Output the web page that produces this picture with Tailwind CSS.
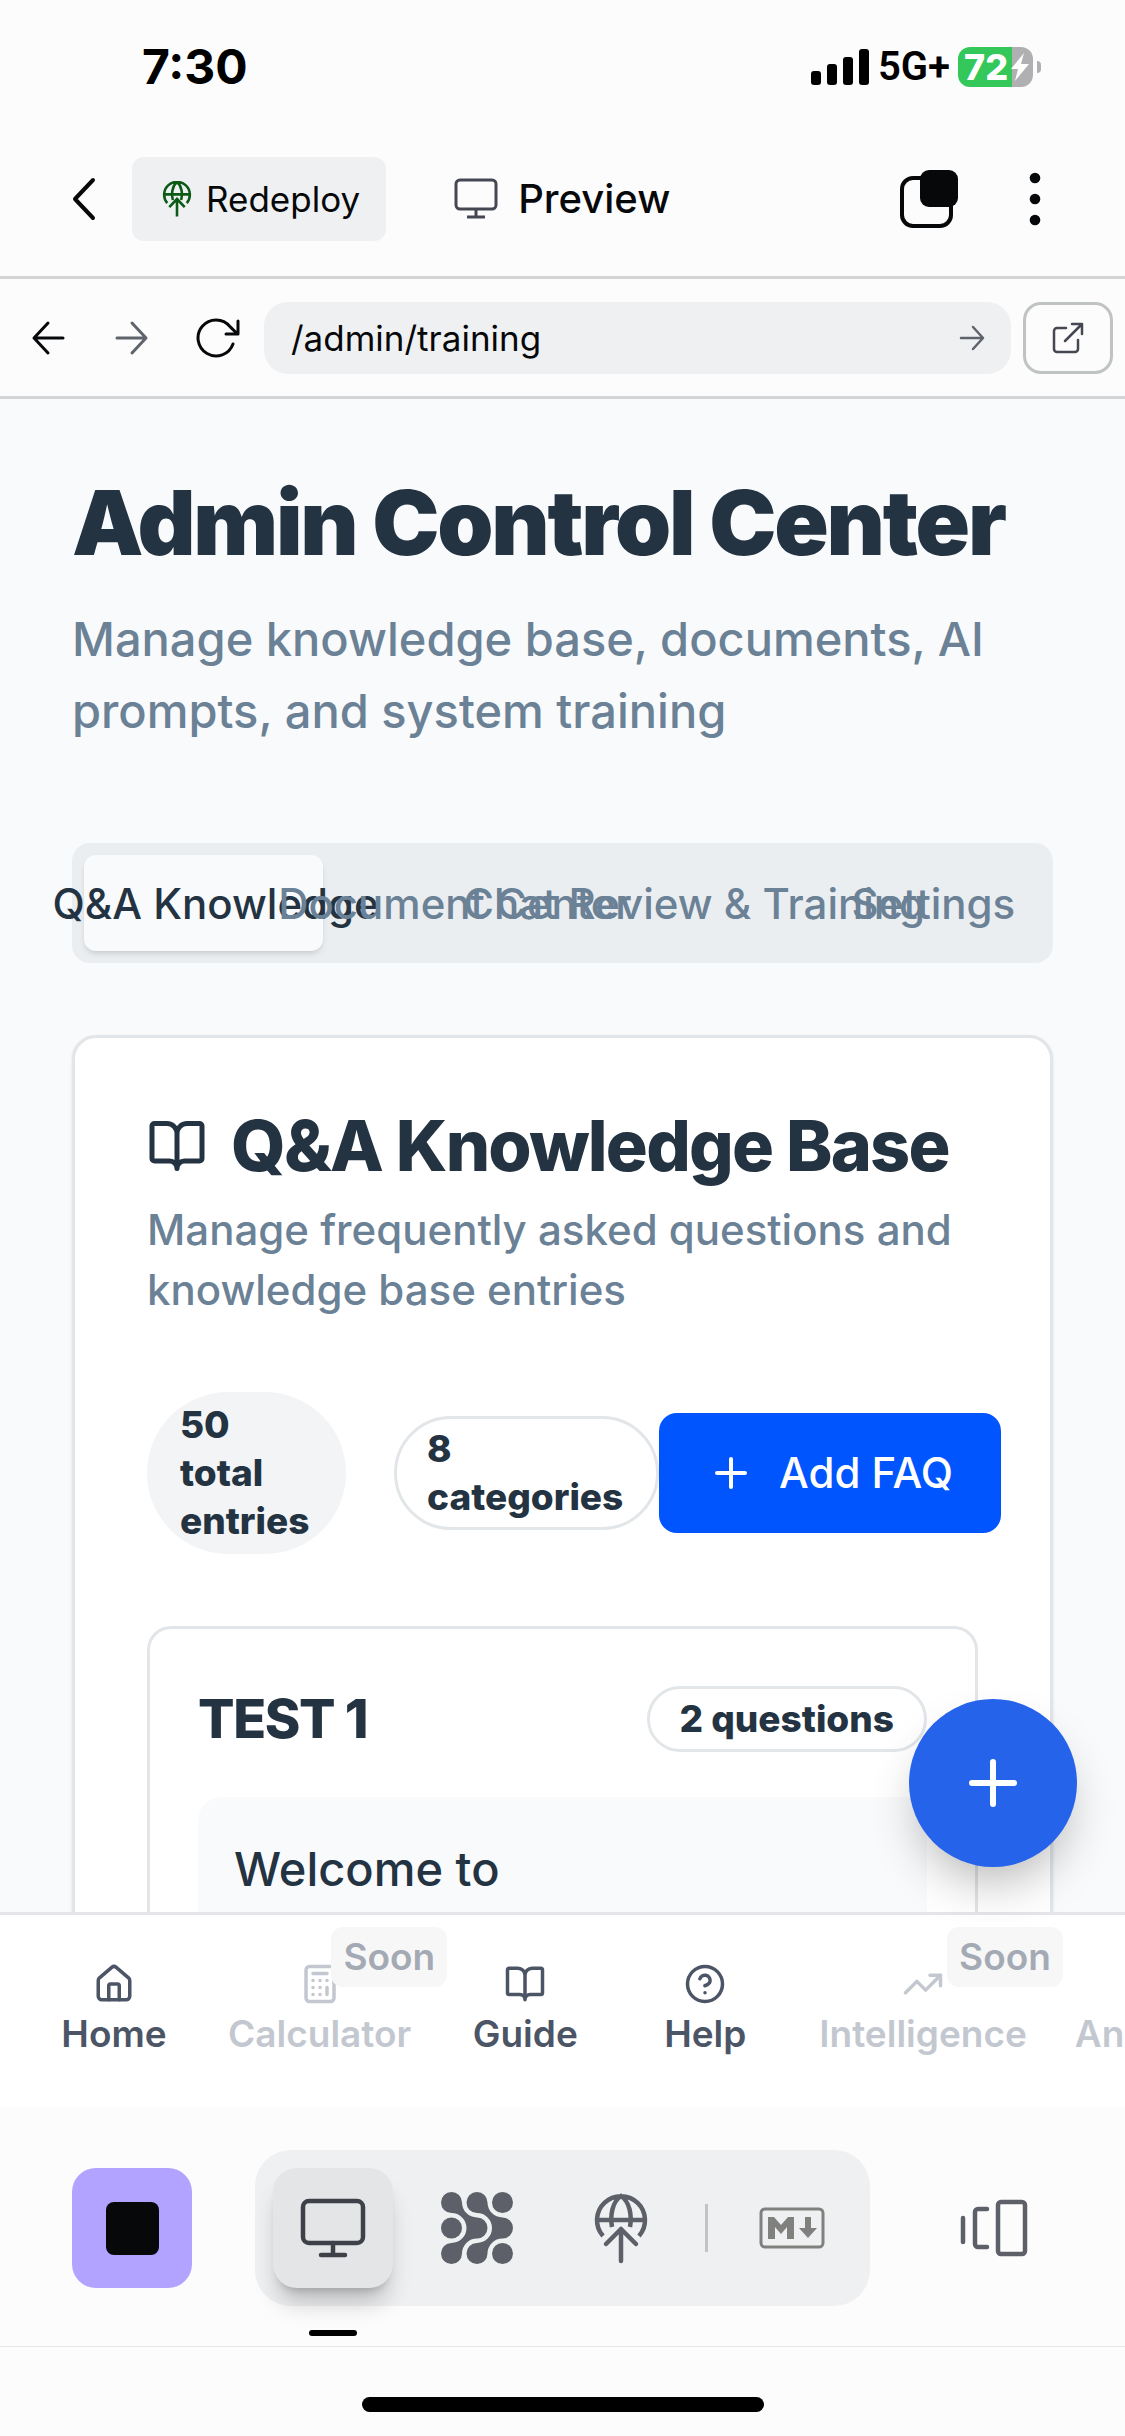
<!DOCTYPE html>
<html lang="en">
<head>
<meta charset="utf-8">
<meta name="viewport" content="width=device-width, initial-scale=1">
<title>Admin Control Center</title>
<script src="https://cdn.jsdelivr.net/npm/@tailwindcss/browser@4"></script>
</head>
<body class="flex h-screen flex-col overflow-hidden bg-[#fcfcfd] font-['Inter',sans-serif] text-[#243342]">

  <!-- Status bar -->
  <div class="flex h-[134px] shrink-0 items-center justify-between pr-[84px] pl-[142px] text-black">
    <time class="text-[48px] leading-[60px] font-bold">7:30</time>
    <div class="flex items-center gap-2">
      <svg class="h-9 w-[59px]" viewBox="0 0 59 36" fill="currentColor" aria-hidden="true"><rect x="0" y="22" width="10" height="14" rx="3"/><rect x="16" y="15" width="10" height="21" rx="3"/><rect x="32" y="8" width="10" height="28" rx="3"/><rect x="48" y="0" width="10" height="36" rx="3"/></svg>
      <span class="font-['Roboto',sans-serif] text-[40px] leading-[48px] font-semibold">5G+</span>
      <div class="flex items-center gap-1">
        <div class="relative flex h-10 w-[75px] items-center rounded-xl bg-linear-to-r from-[#34c759] from-72% to-[#b0b0b2] to-72% pl-[6px]">
          <span class="text-[36px] leading-10 font-extrabold text-white">72</span>
          <svg class="absolute top-[6px] right-[4px] h-7 w-[18px]" viewBox="0 0 18 28" fill="white" aria-hidden="true"><path d="M13 0 0 16h7l-3 12L18 11h-8z"/></svg>
        </div>
        <div class="h-3 w-1 rounded-r-full bg-[#b0b0b2]"></div>
      </div>
    </div>
  </div>

  <!-- App header -->
  <header class="flex h-[145px] shrink-0 items-center border-b-3 border-[#d2d4d6] pr-[84px] pb-[12px] pl-[66px] text-[#07080a]">
    <button class="w-[66px]" aria-label="Back"><svg class="h-[44px] w-[36px]" viewBox="0 0 36 44" fill="none" stroke="currentColor" stroke-width="4" stroke-linecap="round" stroke-linejoin="round"><path d="M27 3 9 22l18 19"/></svg></button>
    <button class="flex h-[84px] items-center gap-[14px] rounded-xl bg-[#eff0f2] pr-[26px] pl-[30px]">
      <svg class="h-[36px] w-[30px] text-[#0b5a16]" viewBox="0 0 54 70" fill="none" stroke="currentColor" stroke-width="5" aria-hidden="true"><path d="M8 43a25 25 0 1 1 38 0M19 37C16 26 17 10 27 2c10 8 11 24 8 35M2 26h50M27 69V36M12 51l15-16 15 16"/></svg>
      <span class="text-[35px] leading-[48px]">Redeploy</span>
    </button>
    <div class="ml-[68px] flex items-center gap-5">
      <svg class="h-[42px] w-[44px] text-[#454852]" viewBox="0 0 44 42" fill="none" stroke="currentColor" stroke-width="3" aria-hidden="true"><rect x="2" y="2" width="40" height="29" rx="4"/><path d="M22 31v8M13 39h18"/></svg>
      <h2 class="text-[40px] leading-[48px] font-medium">Preview</h2>
    </div>
    <button class="ml-auto" aria-label="Windows"><svg class="h-[60px] w-[60px]" viewBox="0 0 60 60" fill="none" stroke="currentColor" stroke-width="4" aria-hidden="true"><rect x="3" y="9" width="49" height="48" rx="11"/><rect x="21" y="1" width="38" height="37" rx="9" fill="currentColor" stroke="none"/></svg></button>
    <button class="ml-[70px]" aria-label="More"><svg class="h-[54px] w-[12px]" viewBox="0 0 12 54" fill="currentColor"><circle cx="6" cy="6" r="5.300"/><circle cx="6" cy="27" r="5.300"/><circle cx="6" cy="48" r="5.300"/></svg></button>
  </header>

  <!-- Address bar -->
  <div class="flex h-[120px] shrink-0 items-center border-b-3 border-[#d2d4d6] pr-3 pl-7 text-[#07080a]">
    <button aria-label="Go back"><svg class="h-10 w-10" viewBox="0 0 40 40" fill="none" stroke="currentColor" stroke-width="3" stroke-linecap="round" stroke-linejoin="round"><path d="M35 20H6M20 5 6 20l14 15"/></svg></button>
    <button class="ml-11 text-[#5f636b]" aria-label="Go forward"><svg class="h-10 w-10" viewBox="0 0 40 40" fill="none" stroke="currentColor" stroke-width="3" stroke-linecap="round" stroke-linejoin="round"><path d="M5 20h29M20 5l14 15-14 15"/></svg></button>
    <button class="ml-11" aria-label="Reload"><svg class="h-10 w-11" viewBox="0 0 44 40" fill="none" stroke="currentColor" stroke-width="3" stroke-linecap="round" stroke-linejoin="round"><path d="M37 26A18 18 0 1 1 34 8.600L41 15.500M42 3v13H30"/></svg></button>
    <div class="ml-6 flex h-[72px] min-w-0 flex-1 items-center rounded-3xl bg-[#eff0f2] pr-[24px] pl-[27px]">
      <input class="min-w-0 flex-1 bg-transparent text-[35px] leading-[48px] outline-none" type="text" value="/admin/training" aria-label="Page path">
      <button class="text-[#5f636b]" aria-label="Go"><svg class="h-[30px] w-[30px]" viewBox="0 0 30 30" fill="none" stroke="currentColor" stroke-width="2.500" stroke-linecap="round" stroke-linejoin="round"><path d="M4 15h22M16 4l10 11-10 11"/></svg></button>
    </div>
    <button class="ml-3 flex h-[72px] w-[90px] items-center justify-center rounded-[18px] border-3 border-[#c0c3c3] text-[#454852]" aria-label="Open in new tab"><svg class="h-[32px] w-[32px]" viewBox="0 0 32 32" fill="none" stroke="currentColor" stroke-width="2.500" stroke-linecap="round" stroke-linejoin="round"><path d="M14 6H5a3 3 0 0 0-3 3v18a3 3 0 0 0 3 3h18a3 3 0 0 0 3-3v-9M20 2h10v10M30 2 13 19"/></svg></button>
  </div>

  <!-- Previewed page -->
  <div class="relative flex min-h-0 flex-1 flex-col">
    <main class="min-h-0 flex-1 overflow-hidden bg-[#f9fafc] px-[72px] pt-[76px]">
      <h1 class="text-[90px] leading-[96px] font-black tracking-tight whitespace-nowrap">Admin Control Center</h1>
      <p class="mt-8 text-[47px] leading-[72px] font-medium text-[#6b8196]">Manage knowledge base, documents, AI prompts, and system training</p>

      <div role="tablist" class="mt-[96px] grid h-[120px] grid-cols-4 rounded-[18px] bg-[#ebeef1] p-3 text-[42px] font-medium whitespace-nowrap text-[#6b8196]">
        <button role="tab" aria-selected="true" class="flex items-center justify-center rounded-xl bg-[#f9fafc] pl-6 text-[#243342] shadow-md shadow-black/10"><span class="flex w-0 justify-center">Q&amp;A Knowledge</span></button>
        <button role="tab" class="flex items-center justify-center pl-6"><span class="flex w-0 justify-center">Document Center</span></button>
        <button role="tab" class="flex items-center justify-center pl-6"><span class="flex w-0 justify-center">Chat Review &amp; Training</span></button>
        <button role="tab" class="flex items-center justify-center pl-6"><span class="flex w-0 justify-center">Settings</span></button>
      </div>

      <section class="mt-[72px] h-[1200px] rounded-3xl border-3 border-[#e2e6e9] bg-white px-[72px] pt-[72px] shadow-sm">
        <h2 class="flex items-center gap-6 text-[70px] leading-[72px] font-extrabold tracking-tight whitespace-nowrap">
          <svg class="h-[60px] w-[60px] shrink-0" viewBox="0 0 24 24" fill="none" stroke="currentColor" stroke-width="2" stroke-linecap="round" stroke-linejoin="round" aria-hidden="true"><path d="M12 7v14M3 18a1 1 0 0 1-1-1V4a1 1 0 0 1 1-1h5a4 4 0 0 1 4 4 4 4 0 0 1 4-4h5a1 1 0 0 1 1 1v13a1 1 0 0 1-1 1h-6a3 3 0 0 0-3 3 3 3 0 0 0-3-3z"/></svg>
          Q&amp;A Knowledge Base
        </h2>
        <p class="mt-[18px] text-[42px] leading-[60px] font-medium text-[#6b8196]">Manage frequently asked questions and knowledge base entries</p>

        <div class="mt-[72px] flex items-center text-[37px] leading-[48px] font-extrabold">
          <span class="w-[199px] shrink-0 rounded-full border-3 border-[#f3f4f6] bg-[#f3f4f6] px-[30px] py-[6px]">50 total entries</span>
          <span class="ml-12 w-[265px] shrink-0 rounded-full border-3 border-[#e2e6e9] px-[30px] py-[6px]">8 categories</span>
          <button class="flex h-[120px] shrink-0 items-center gap-6 rounded-[18px] bg-[#0055ff] px-12 text-[42px] font-medium whitespace-nowrap text-white">
            <svg class="h-12 w-12" viewBox="0 0 24 24" fill="none" stroke="currentColor" stroke-width="2" stroke-linecap="round" aria-hidden="true"><path d="M5 12h14M12 5v14"/></svg>
            Add FAQ
          </button>
        </div>

        <article class="mt-[72px] h-[700px] rounded-3xl border-3 border-[#e2e6e9] px-12 pt-[57px]">
          <div class="flex items-center justify-between">
            <h3 class="text-[54px] leading-[66px] font-extrabold tracking-tight">TEST 1</h3>
            <span class="rounded-full border-3 border-[#e2e6e9] px-[30px] py-[6px] text-[37px] leading-[48px] font-extrabold">2 questions</span>
          </div>
          <div class="mt-[45px] h-[400px] rounded-3xl bg-[#f9fafc] px-9 pt-9">
            <p class="text-[47px] leading-[72px] font-medium">Welcome to</p>
          </div>
        </article>
      </section>
    </main>

    <button class="absolute right-12 bottom-[240px] flex h-[168px] w-[168px] items-center justify-center rounded-full bg-[#2563eb] text-white shadow-2xl shadow-black/30" aria-label="Add">
      <svg class="h-[72px] w-[72px]" viewBox="0 0 24 24" fill="none" stroke="currentColor" stroke-width="2" stroke-linecap="round"><path d="M5 12h14M12 5v14"/></svg>
    </button>

    <nav class="flex h-[195px] shrink-0 overflow-hidden border-t-3 border-[#e4e6ea] bg-white px-6 pt-6 text-[37px] leading-[48px] font-semibold text-[#4b5565]">
      <a href="#" class="flex min-w-[180px] shrink-0 flex-col items-center gap-[5px] px-6 pt-6">
        <svg class="h-[42px] w-[42px]" viewBox="0 0 24 24" fill="none" stroke="currentColor" stroke-width="2" stroke-linecap="round" stroke-linejoin="round" aria-hidden="true"><path d="M15 21v-8a1 1 0 0 0-1-1h-4a1 1 0 0 0-1 1v8"/><path d="M3 10a2 2 0 0 1 .709-1.528l7-5.999a2 2 0 0 1 2.582 0l7 5.999A2 2 0 0 1 21 10v9a2 2 0 0 1-2 2H5a2 2 0 0 1-2-2z"/></svg>
        Home
      </a>
      <a href="#" class="relative flex min-w-[180px] shrink-0 flex-col items-center gap-[5px] px-6 pt-6 text-[#c3c8d0]">
        <svg class="h-[42px] w-[42px]" viewBox="0 0 24 24" fill="none" stroke="currentColor" stroke-width="2" stroke-linecap="round" stroke-linejoin="round" aria-hidden="true"><rect width="16" height="20" x="4" y="2" rx="2"/><path d="M8 6h8M16 14v4M16 10h.01M12 10h.01M8 10h.01M12 14h.01M8 14h.01M12 18h.01M8 18h.01"/></svg>
        Calculator
        <span class="absolute -top-3 -right-3 rounded-xl bg-[#f7f7f8] px-3 py-[6px] text-[#a4aab3]">Soon</span>
      </a>
      <a href="#" class="flex min-w-[180px] shrink-0 flex-col items-center gap-[5px] px-6 pt-6">
        <svg class="h-[42px] w-[42px]" viewBox="0 0 24 24" fill="none" stroke="currentColor" stroke-width="2" stroke-linecap="round" stroke-linejoin="round" aria-hidden="true"><path d="M12 7v14M3 18a1 1 0 0 1-1-1V4a1 1 0 0 1 1-1h5a4 4 0 0 1 4 4 4 4 0 0 1 4-4h5a1 1 0 0 1 1 1v13a1 1 0 0 1-1 1h-6a3 3 0 0 0-3 3 3 3 0 0 0-3-3z"/></svg>
        Guide
      </a>
      <a href="#" class="flex min-w-[180px] shrink-0 flex-col items-center gap-[5px] px-6 pt-6">
        <svg class="h-[42px] w-[42px]" viewBox="0 0 24 24" fill="none" stroke="currentColor" stroke-width="2" stroke-linecap="round" stroke-linejoin="round" aria-hidden="true"><circle cx="12" cy="12" r="10"/><path d="M9.090 9a3 3 0 0 1 5.830 1c0 2-3 3-3 3M12 17h.01"/></svg>
        Help
      </a>
      <a href="#" class="relative flex min-w-[180px] shrink-0 flex-col items-center gap-[5px] px-6 pt-6 text-[#c3c8d0]">
        <svg class="h-[42px] w-[42px]" viewBox="0 0 24 24" fill="none" stroke="currentColor" stroke-width="2" stroke-linecap="round" stroke-linejoin="round" aria-hidden="true"><path d="M16 7h6v6"/><path d="m22 7-8.500 8.500-5-5L2 17"/></svg>
        Intelligence
        <span class="absolute -top-3 -right-3 rounded-xl bg-[#f7f7f8] px-3 py-[6px] text-[#a4aab3]">Soon</span>
      </a>
      <a href="#" class="flex min-w-[180px] shrink-0 flex-col items-center gap-[5px] px-6 pt-6 text-[#c3c8d0]">
        <span class="h-[42px]"></span>
        Analytics
      </a>
    </nav>
  </div>

  <!-- Workspace toolbar -->
  <div class="flex h-[240px] shrink-0 items-start border-b border-[#e6e7e8] px-[72px] pt-[43px] text-[#5d6068]">
    <button class="mt-[18px] flex h-[120px] w-[120px] items-center justify-center rounded-3xl bg-[#b1a3ff]" aria-label="Stop"><span class="h-[53px] w-[53px] rounded-lg bg-[#07080a]"></span></button>
    <div class="ml-[63px] flex h-[156px] items-center rounded-[36px] bg-[#eff0f2] px-[18px]">
      <button class="relative flex h-[120px] w-[120px] items-center justify-center rounded-3xl bg-[#e4e5e7] text-[#3f4149] shadow-xl shadow-black/20" aria-label="Preview">
        <svg class="h-[60px] w-[66px]" viewBox="0 0 66 60" fill="none" stroke="currentColor" stroke-width="4.500" stroke-linecap="round" aria-hidden="true"><rect x="3" y="3" width="60" height="42" rx="6"/><path d="M33 45v12M21 57h24"/></svg>
        <span class="absolute top-[162px] left-9 h-[6px] w-12 rounded-full bg-black"></span>
      </button>
      <button class="ml-12 w-[72px]" aria-label="Agent">
        <svg class="h-[72px] w-[72px]" viewBox="0 0 72 72" fill="currentColor"><path d="M10.500 21A10.500 10.500 0 1 1 21 10.500A15 15 0 0 0 36 25.500A10.500 10.500 0 0 1 36 46.500A15 15 0 0 0 21 61.500A10.500 10.500 0 1 1 10.500 51A15 15 0 0 0 10.500 21z"/><path transform="translate(25.500 0)" d="M10.500 21A10.500 10.500 0 1 1 21 10.500A15 15 0 0 0 36 25.500A10.500 10.500 0 0 1 36 46.500A15 15 0 0 0 21 61.500A10.500 10.500 0 1 1 10.500 51A15 15 0 0 0 10.500 21z"/><circle cx="61.500" cy="10.500" r="10.500"/><circle cx="10.500" cy="36" r="10.500"/><circle cx="61.500" cy="61.500" r="10.500"/></svg>
      </button>
      <button class="ml-[81px]" aria-label="Deploy"><svg class="h-[72px] w-[54px]" viewBox="0 0 54 72" fill="none" stroke="currentColor" stroke-width="4.500" stroke-linecap="butt"><path d="M9 44a24 24 0 1 1 36 0M18 35C16 24 18 10 27 4c9 6 11 20 9 31M3 28h48"/><path stroke-linecap="round" stroke-linejoin="round" d="M27 69V37M12 52l15-15 15 15"/></svg></button>
      <span class="ml-[57px] h-12 w-[3px] bg-[#c1c3c6]"></span>
      <button class="mr-[27px] ml-[51px] text-[#80807f]" aria-label="Markdown"><svg class="h-[42px] w-[66px]" viewBox="0 0 66 42" fill="none" stroke="currentColor" stroke-width="3"><rect x="2" y="2" width="62" height="38" rx="4"/><path d="M9 32V10h6l7 8 7-8h6v22h-7V20l-6 7-6-7v12zM46 10h6v11h6L49 31 40 21h6z" fill="currentColor" stroke="none"/></svg></button>
    </div>
    <button class="mt-[49px] ml-auto mr-[25px]" aria-label="Panels"><svg class="h-[58px] w-[68px]" viewBox="0 0 68 58" fill="none" stroke="currentColor" stroke-width="4.500" stroke-linecap="round" stroke-linejoin="round"><rect x="38" y="3" width="27" height="52" rx="3"/><path d="M27 10H18a3 3 0 0 0-3 3v32a3 3 0 0 0 3 3h9M3 19v24"/></svg></button>
  </div>
  <div class="flex h-[89px] shrink-0 items-end justify-center pb-6"><div class="h-[15px] w-[402px] rounded-full bg-black"></div></div>
</body>
</html>
